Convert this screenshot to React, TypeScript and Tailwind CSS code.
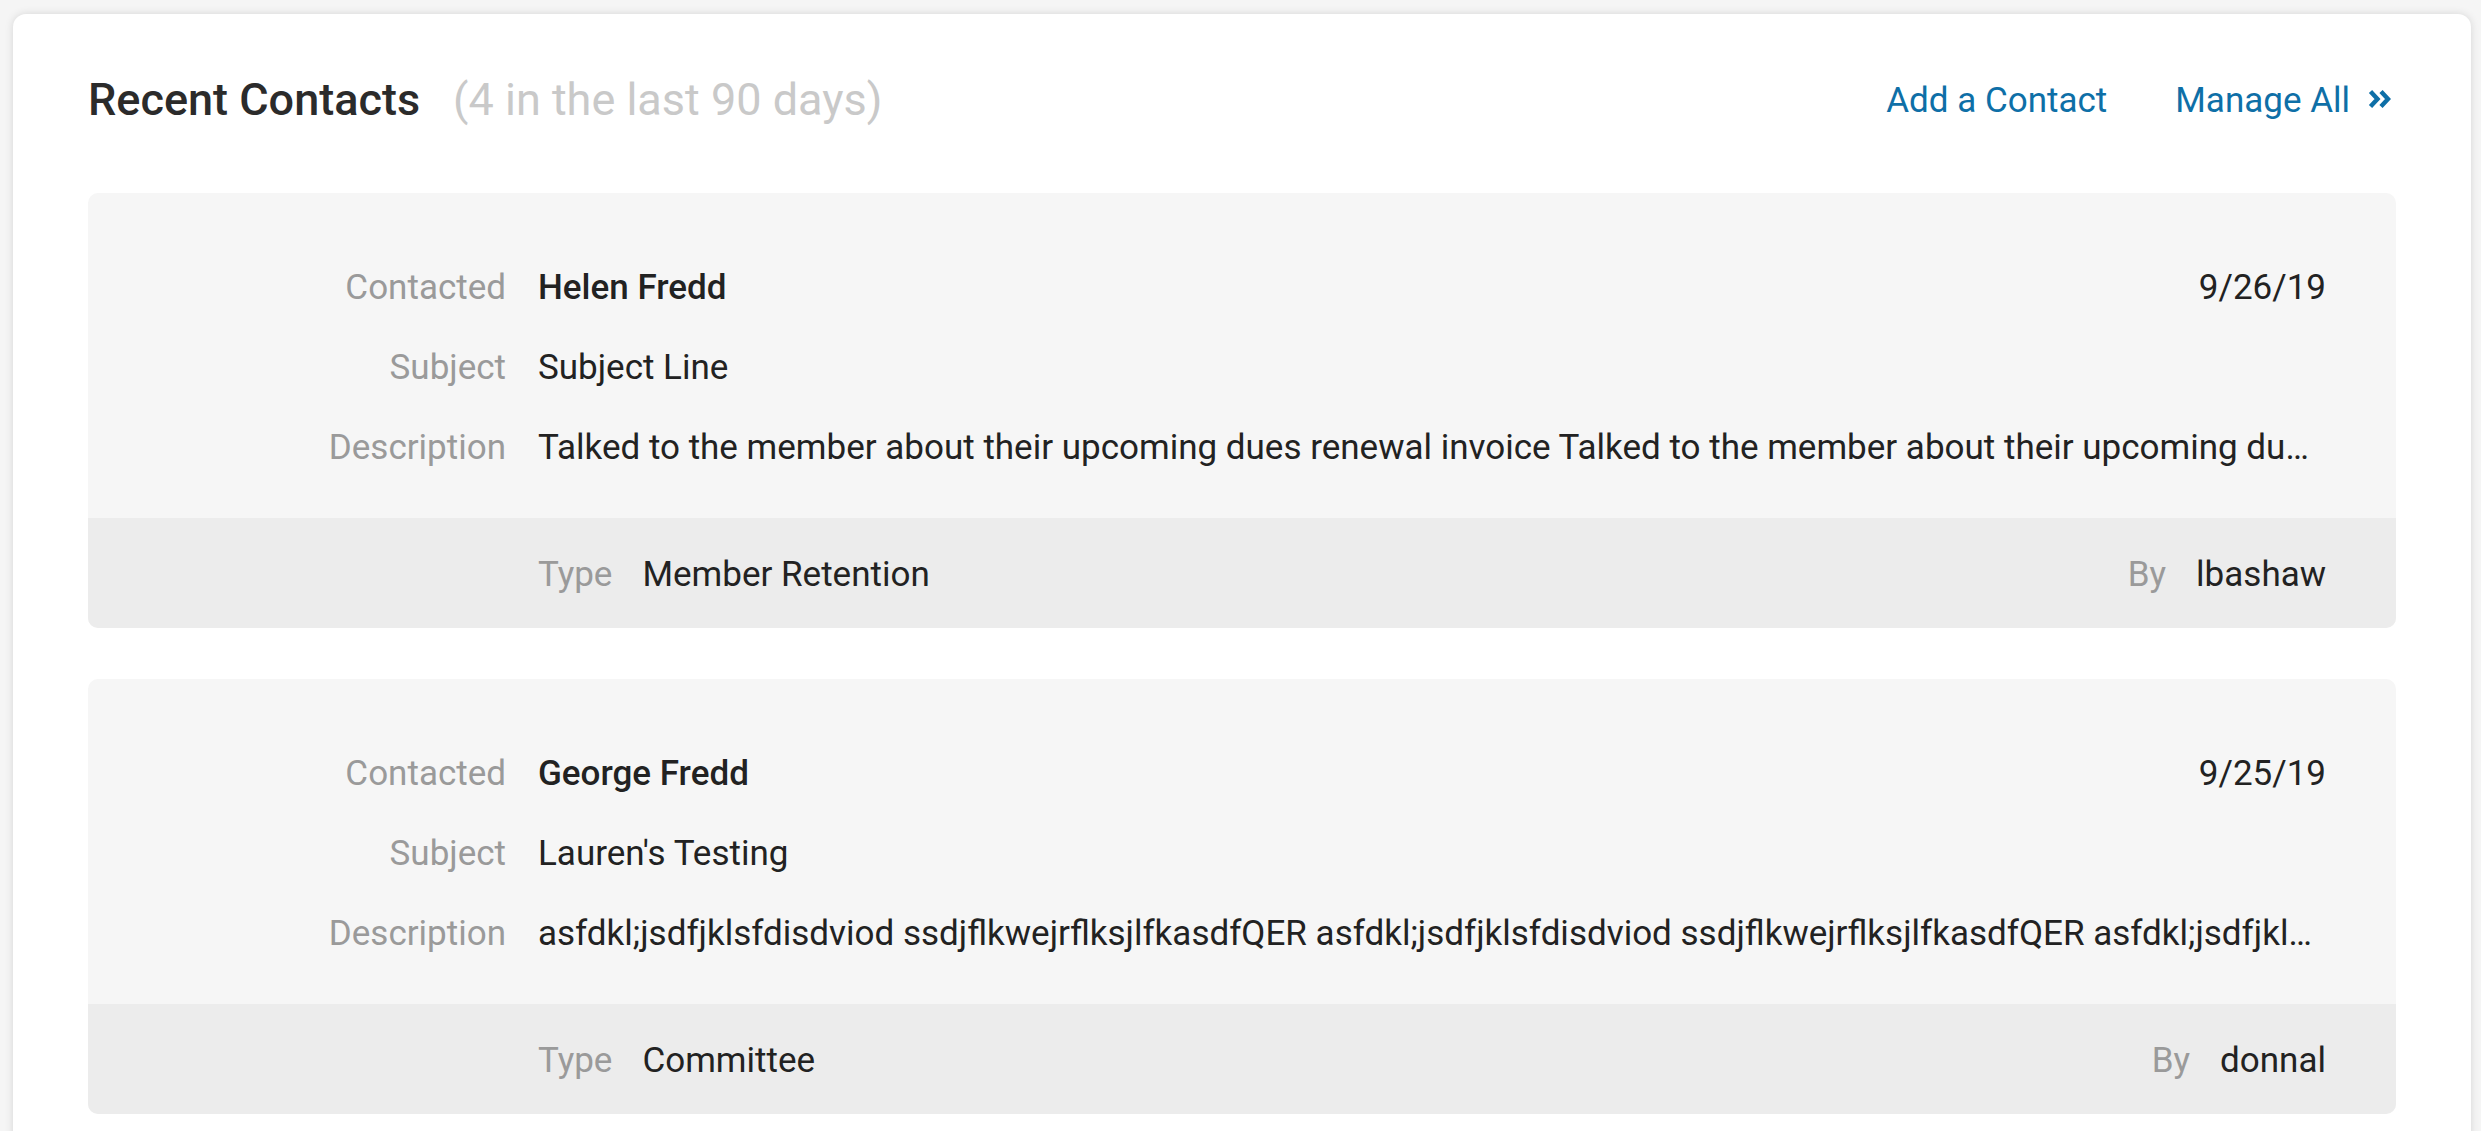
const contacts = [
  {
    name: "Helen Fredd",
    date: "9/26/19",
    subject: "Subject Line",
    description:
      "Talked to the member about their upcoming dues renewal invoice Talked to the member about their upcoming dues renewal invoice Talked to the member about their upcoming dues renewal invoice",
    type: "Member Retention",
    by: "lbashaw",
  },
  {
    name: "George Fredd",
    date: "9/25/19",
    subject: "Lauren's Testing",
    description:
      "asfdkl;jsdfjklsfdisdviod ssdjflkwejrflksjlfkasdfQER asfdkl;jsdfjklsfdisdviod ssdjflkwejrflksjlfkasdfQER asfdkl;jsdfjklsfdisdviod ssdjflkwejrflksjlfkasdfQER",
    type: "Committee",
    by: "donnal",
  },
]

function DoubleChevron() {
  return (
    <svg width="23" height="20" viewBox="0 0 23 20" fill="none" className="ml-[18px] mt-[-6px]">
      <path d="M2.5 2.5 L9.5 10 L2.5 17.5" stroke="#0e6fa7" strokeWidth="4.4" strokeLinejoin="miter" />
      <path d="M13 2.5 L20 10 L13 17.5" stroke="#0e6fa7" strokeWidth="4.4" strokeLinejoin="miter" />
    </svg>
  )
}

function ContactCard({ c }: { c: (typeof contacts)[number] }) {
  return (
    <div className="rounded-[10px] overflow-hidden bg-[#f6f6f6]">
      <div className="pt-[55px] pb-[30px] pr-[70px]">
        <div className="flex h-[80px] items-center">
          <div className="w-[418px] shrink-0 text-right text-[#9a9a9a]">Contacted</div>
          <div className="ml-8 flex-1 font-medium text-[#222]">{c.name}</div>
          <div className="text-[#222]">{c.date}</div>
        </div>
        <div className="flex h-[80px] items-center">
          <div className="w-[418px] shrink-0 text-right text-[#9a9a9a]">Subject</div>
          <div className="ml-8 flex-1 text-[#222]">{c.subject}</div>
        </div>
        <div className="flex h-[80px] items-center">
          <div className="w-[418px] shrink-0 text-right text-[#9a9a9a]">Description</div>
          <div className="ml-8 min-w-0 flex-1 truncate text-[#222]">{c.description}</div>
        </div>
      </div>
      <div className="flex h-[110px] items-center bg-[#ececec] pl-[450px] pr-[70px] pt-[5px]">
        <span className="text-[#9a9a9a]">Type</span>
        <span className="ml-[30px] flex-1 text-[#222]">{c.type}</span>
        <span className="text-[#9a9a9a]">By</span>
        <span className="ml-[30px] text-[#222]">{c.by}</span>
      </div>
    </div>
  )
}

export default function App() {
  return (
    <div className="h-screen overflow-hidden bg-[#f5f5f5] pl-[13px] pr-[10px] pt-[14px] text-[35px]" style={{ fontFamily: "Roboto, 'Liberation Sans', sans-serif" }}>
      <div className="rounded-[13px] bg-white px-[75px] pt-[36px] pb-[75px] shadow-[0_0_9px_rgba(0,0,0,0.13)]">
        <div className="flex h-[100px] items-center">
          <h1 className="text-[45px] font-medium text-[#2b2b2b]">Recent Contacts</h1>
          <span className="ml-[33px] text-[45px] text-[#c9c9c9]">(4 in the last 90 days)</span>
          <div className="ml-auto mr-[5px] mt-[3px] flex items-center text-[#0e6fa7]">
            <a className="cursor-pointer">Add a Contact</a>
            <a className="ml-[68px] flex cursor-pointer items-center">
              Manage All
              <DoubleChevron />
            </a>
          </div>
        </div>
        <div className="mt-[43px] flex flex-col gap-[51px]">
          {contacts.map((c) => (
            <ContactCard key={c.name} c={c} />
          ))}
        </div>
      </div>
    </div>
  )
}
